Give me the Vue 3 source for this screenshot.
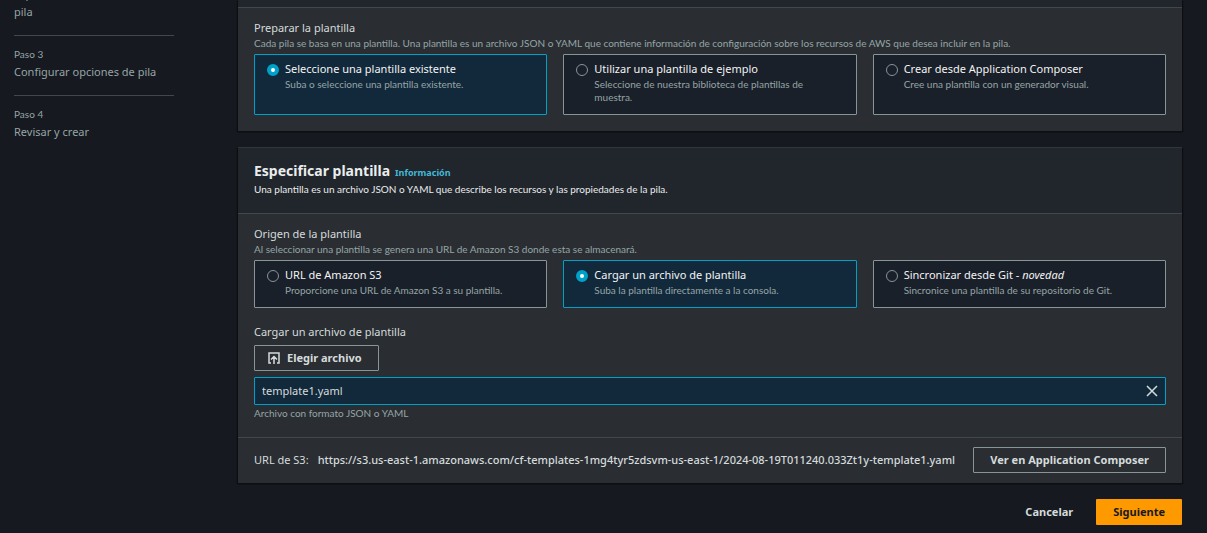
<script setup>
import { ref } from 'vue'

const steps = [
  { id: 2, title: 'Especificar los detalles de la pila' },
  { id: 3, step: 'Paso 3', title: 'Configurar opciones de pila' },
  { id: 4, step: 'Paso 4', title: 'Revisar y crear' }
]

const preparation = ref('existing')
const preparations = [
  { value: 'existing', label: 'Seleccione una plantilla existente', text: 'Suba o seleccione una plantilla existente.' },
  { value: 'sample', label: 'Utilizar una plantilla de ejemplo', text: 'Seleccione de nuestra biblioteca de plantillas de muestra.' },
  { value: 'composer', label: 'Crear desde Application Composer', text: 'Cree una plantilla con un generador visual.' }
]

const source = ref('upload')
const sources = [
  { value: 's3', label: 'URL de Amazon S3', text: 'Proporcione una URL de Amazon S3 a su plantilla.' },
  { value: 'upload', label: 'Cargar un archivo de plantilla', text: 'Suba la plantilla directamente a la consola.' },
  { value: 'git', label: 'Sincronizar desde Git - ', note: 'novedad', text: 'Sincronice una plantilla de su repositorio de Git.' }
]

const fileName = ref('template1.yaml')
</script>

<template>
  <div class="page">
    <nav class="steps" aria-label="Pasos">
      <ol>
        <li v-for="s in steps" :key="s.id">
          <span v-if="s.step" class="step-number">{{ s.step }}</span>
          <span class="step-title">{{ s.title }}</span>
        </li>
      </ol>
    </nav>

    <main class="content">
      <section class="panel panel-first">
        <div class="panel-body">
          <fieldset>
            <legend>Preparar la plantilla</legend>
            <p class="hint">Cada pila se basa en una plantilla. Una plantilla es un archivo JSON o YAML que contiene información de configuración sobre los recursos de AWS que desea incluir en la pila.</p>
            <div class="tiles">
              <label v-for="o in preparations" :key="o.value" class="tile" :class="{ selected: preparation === o.value }">
                <input v-model="preparation" type="radio" name="preparation" :value="o.value">
                <span class="tile-text">
                  <span class="tile-label">{{ o.label }}</span>
                  <span class="hint">{{ o.text }}</span>
                </span>
              </label>
            </div>
          </fieldset>
        </div>
      </section>

      <section class="panel">
        <header class="panel-header">
          <div class="heading">
            <h2>Especificar plantilla</h2>
            <a href="#info">Información</a>
          </div>
          <p>Una plantilla es un archivo JSON o YAML que describe los recursos y las propiedades de la pila.</p>
        </header>
        <div class="panel-body">
          <fieldset>
            <legend>Origen de la plantilla</legend>
            <p class="hint">Al seleccionar una plantilla se genera una URL de Amazon S3 donde esta se almacenará.</p>
            <div class="tiles">
              <label v-for="o in sources" :key="o.value" class="tile" :class="{ selected: source === o.value }">
                <input v-model="source" type="radio" name="source" :value="o.value">
                <span class="tile-text">
                  <span class="tile-label">{{ o.label }}<em v-if="o.note">{{ o.note }}</em></span>
                  <span class="hint">{{ o.text }}</span>
                </span>
              </label>
            </div>
          </fieldset>

          <div class="upload">
            <label class="field-label" for="file-name">Cargar un archivo de plantilla</label>
            <button type="button" class="button outlined">
              <svg class="icon" viewBox="0 0 12 12" aria-hidden="true">
                <path d="M3 11H1V1h10v10H9M6 12V5M3 7.500l3-3 3 3" />
              </svg>
              Elegir archivo
            </button>
            <div class="file">
              <input id="file-name" v-model="fileName" type="text" readonly>
              <button type="button" class="clear" aria-label="Quitar archivo" @click="fileName = ''">
                <svg viewBox="0 0 12 12" aria-hidden="true"><path d="m1 1 10 10M11 1 1 11" /></svg>
              </button>
            </div>
            <p class="hint">Archivo con formato JSON o YAML</p>
          </div>
        </div>
        <footer class="panel-footer">
          <span>URL de S3:</span>
          <span class="url">https://s3.us-east-1.amazonaws.com/cf-templates-1mg4tyr5zdsvm-us-east-1/2024-08-19T011240.033Zt1y-template1.yaml</span>
          <button type="button" class="button outlined">Ver en Application Composer</button>
        </footer>
      </section>

      <div class="actions">
        <button type="button" class="button">Cancelar</button>
        <button type="button" class="button primary">Siguiente</button>
      </div>
    </main>
  </div>
</template>

<style>
body {
  background: #16191f;
}
</style>

<style scoped>
.page {
  display: grid;
  grid-template-columns: 160px minmax(0, 1fr);
  column-gap: 64px;
  padding: 0 25px 8px 14px;
  min-height: 100vh;
  box-sizing: border-box;
  overflow: hidden;
  background: #16191f;
  color: #d5dbdb;
  font-family: "Noto Sans", "Open Sans", sans-serif;
  font-size: 11px;
  line-height: 18px;
}

p,
h2,
ol,
fieldset {
  margin: 0;
  padding: 0;
  border: 0;
  min-width: 0;
}

.steps {
  margin-top: -15px;
  color: #95a5a6;
}

.steps ol {
  list-style: none;
}

.steps li {
  padding-bottom: 14px;
  margin-bottom: 9px;
  border-bottom: 1px solid #414750;
}

.steps li:last-child {
  border-bottom: 0;
}

.step-number,
.step-title {
  display: block;
}

.step-number,
.hint,
.panel-header p {
  font-family: Lato, "Noto Sans", sans-serif;
  font-size: 10px;
}

.panel {
  margin-bottom: 16px;
  background: #2a2e33;
  border-top: 1px solid #30353b;
  box-shadow: 0 1px 1px #0d0f12, 1px 1px 1px #0d0f12, -1px 1px 1px #0d0f12;
}

.panel-first {
  border-top: 0;
  padding-top: 7px;
  background: linear-gradient(#21252c 7px, #2a2e33 7px);
}

.panel-first .panel-body {
  border-top: 1px solid #414750;
}

.panel-header {
  padding: 13px 16px 16px;
  background: #21252c;
  border-bottom: 1px solid #414750;
}

.panel-header p {
  line-height: 16px;
  color: #eaeded;
}

.heading {
  display: flex;
  align-items: baseline;
  gap: 5px;
  line-height: 20px;
}

h2 {
  font-size: 14px;
  font-weight: 700;
  color: #eaeded;
}

.heading a {
  font-size: 9px;
  line-height: 16px;
  font-weight: 700;
  color: #44b9d6;
  text-decoration: none;
}

.panel-body {
  padding: 11px 16px 17px;
}

.panel-first .panel-body {
  padding-bottom: 16px;
}

legend,
.field-label {
  display: block;
  padding: 0;
  color: #d5dbdb;
}

.hint {
  line-height: 13px;
  color: #95a5a6;
}

.tiles {
  display: grid;
  grid-template-columns: repeat(3, minmax(0, 1fr));
  gap: 16px;
  margin-top: 4px;
}

.tile {
  display: flex;
  align-items: flex-start;
  gap: 6px;
  padding: 5px 24px 10px 12px;
  border: 1px solid #879596;
  border-radius: 1px;
  background: #1a2029;
}

.tile.selected {
  border-color: #00a1c9;
  background: #12293b;
}

.tile input {
  appearance: none;
  flex: none;
  box-sizing: border-box;
  width: 12px;
  height: 12px;
  margin: 4px 0 0;
  border: 1px solid #879596;
  border-radius: 50%;
}

.tile input:checked {
  border: 4px solid #00a1c9;
  background: #fff;
}

.tile-label,
.tile-text .hint {
  display: block;
}

.tile-label {
  color: #f2f3f3;
}

.upload {
  margin-top: 15px;
}

.button {
  display: inline-flex;
  align-items: center;
  gap: 7px;
  height: 26px;
  padding: 0 16px 1px;
  border: 1px solid transparent;
  border-radius: 1px;
  background: transparent;
  color: #d5dbdb;
  font: inherit;
  font-weight: 700;
  white-space: nowrap;
}

.outlined {
  border-color: #879596;
}

.primary {
  background: #f90;
  color: #16191f;
}

svg {
  display: block;
  width: 12px;
  height: 12px;
  fill: none;
  stroke: #d5dbdb;
  stroke-width: 1.5;
}

.upload .button {
  margin-top: 4px;
  padding: 0 16px 1px 13px;
}

.file {
  display: flex;
  align-items: center;
  height: 26px;
  margin: 6px 0 2px;
  padding: 0 7px;
  border: 1px solid #00a1c9;
  border-radius: 1px;
  background: #12293b;
}

.file input {
  flex: 1;
  min-width: 0;
  padding: 0;
  border: 0;
  outline: 0;
  background: transparent;
  color: #d5dbdb;
  font: inherit;
}

.clear {
  padding: 0;
  border: 0;
  background: transparent;
}

.panel-footer {
  display: flex;
  align-items: center;
  gap: 9px;
  padding: 9px 16px 10px;
  border-top: 1px solid #414750;
}

.panel-footer .button {
  margin-left: auto;
}

.url {
  min-width: 0;
  font-weight: 500;
  overflow-wrap: anywhere;
}

.actions {
  display: flex;
  justify-content: flex-end;
  gap: 6px;
}
</style>
